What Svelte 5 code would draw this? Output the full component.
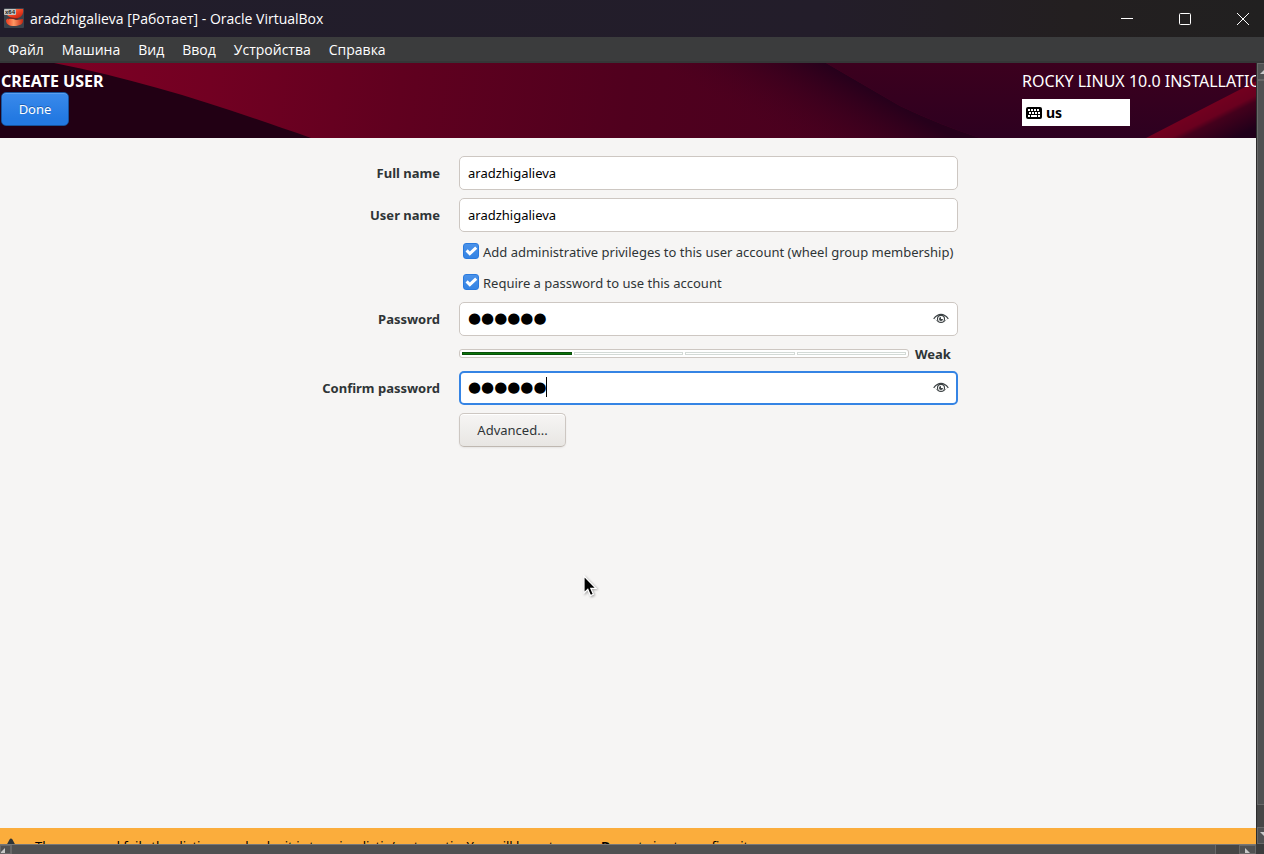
<script>
  const menus = ['Файл', 'Машина', 'Вид', 'Ввод', 'Устройства', 'Справка'];
  let fullName = $state('aradzhigalieva');
  let userName = $state('aradzhigalieva');
  let password = $state('●●●●●●');
  let confirmation = $state('●●●●●●');
  let admin = $state(true);
  let required = $state(true);
  const strength = 1;
</script>

{#snippet eye()}
  <button class="eye" type="button" aria-label="Show password">
    <svg width="16" height="12" viewBox="0 0 16 12" fill="none" stroke="#3c4244">
      <path d="M.7 5.8C3 2.8 5.3 1.4 8 1.4s5 1.4 7.3 4.4" stroke-width="1.2" />
      <circle cx="8" cy="5.9" r="3.5" stroke-width="1.1" />
      <path d="M8 3.9A2 2 0 1 0 10 5.9H8z" fill="#3c4244" stroke="none" />
      <path d="M2.8 6.6c.6 1 1.3 1.8 2.2 2.4M13.2 6.6c-.6 1-1.3 1.8-2.2 2.4" stroke-width=".7" opacity=".6" />
    </svg>
  </button>
{/snippet}

{#snippet check()}
  <svg class="tick" viewBox="0 0 16 16" aria-hidden="true"><path d="M3.6 7.4 6.8 10.6 13.2 4.6" fill="none" stroke="#fff" stroke-width="3" /></svg>
{/snippet}

<div class="window">
  <header class="titlebar">
    <svg class="logo" width="20" height="20" viewBox="0 0 20 20" aria-hidden="true">
      <defs>
        <linearGradient id="lr" x1="0" x2="1" y1="0" y2="1"><stop offset="0" stop-color="#ff9a68" /><stop offset=".5" stop-color="#f04424" /><stop offset="1" stop-color="#b81b0c" /></linearGradient>
        <linearGradient id="lo"><stop offset="0" stop-color="#ee3b1e" /><stop offset=".45" stop-color="#ff9863" /><stop offset="1" stop-color="#c42410" /></linearGradient>
      </defs>
      <rect width="20" height="20" rx="1" fill="#3b424b" />
      <path d="M11 1h8c1 4-1 8-5 9-5 1-9-1-11-3h6c2 0 2-2 2-6z" fill="url(#lr)" />
      <path d="M2 12c3-3 7-1 10 0 3 0 5-1 7-1 1 5-3 7-9 7-5 0-8-2-8-6z" fill="url(#lo)" />
      <path d="M4 11c4-2 7 0 10 0" fill="none" stroke="#8b160c" />
      <rect x="0" y="1" width="12" height="6" rx="1" fill="#c4c4c1" />
      <text x="1" y="6" font-family="Liberation Sans" font-size="6" font-weight="bold" fill="#222">x64</text>
    </svg>
    <h1>aradzhigalieva [Работает] - Oracle VirtualBox</h1>
    <div class="controls">
      <button aria-label="Minimize"><svg width="14" height="14" viewBox="0 0 14 14"><path d="M1 6.500h12" /></svg></button>
      <button aria-label="Maximize"><svg width="14" height="14" viewBox="0 0 14 14"><rect x="1.5" y="1.5" width="11" height="11" rx="1" /></svg></button>
      <button aria-label="Close"><svg width="14" height="14" viewBox="0 0 14 14"><path d="m1 1 12 12M13 1 1 13" /></svg></button>
    </div>
  </header>
  <nav>{#each menus as m}<button>{m}</button>{/each}</nav>

  <div class="viewer">
    <div class="screen">
      <main class="guest">
        <header class="banner">
          <svg class="art" viewBox="0 0 1280 75" preserveAspectRatio="none" aria-hidden="true">
            <defs>
              <linearGradient id="red" gradientUnits="userSpaceOnUse" x1="60" y1="0" x2="1000" y2="120">
                <stop offset="0" stop-color="#7d0024" /><stop offset=".16" stop-color="#720022" /><stop offset=".36" stop-color="#60001f" /><stop offset=".6" stop-color="#50001e" /><stop offset="1" stop-color="#44001f" />
              </linearGradient>
              <linearGradient id="shade" gradientUnits="userSpaceOnUse" x1="863" y1="22" x2="821" y2="95">
                <stop offset="0" stop-color="#26001b" /><stop offset="1" stop-color="#48001e" stop-opacity="0" />
              </linearGradient>
              <linearGradient id="plum" x1="0" y1="0" x2="0" y2="1"><stop offset="0" stop-color="#3c001e" /><stop offset="1" stop-color="#2d0020" /></linearGradient>
              <linearGradient id="ribbon" gradientUnits="userSpaceOnUse" x1="1201" y1="47" x2="1219" y2="83">
                <stop offset="0" stop-color="#72001f" /><stop offset=".28" stop-color="#6a001f" /><stop offset=".42" stop-color="#44001c" /><stop offset="1" stop-color="#20001a" />
              </linearGradient>
            </defs>
            <rect width="1280" height="75" fill="url(#red)" />
            <path d="M500 0H826L900 43Q940 62 980 75H500Z" fill="url(#shade)" />
            <path d="M826 0 900 43Q940 62 980 75H1280V0Z" fill="url(#plum)" />
            <path d="M0 0H54C145 18 220 43 311 75H0Z" fill="#220014" />
            <path d="M1146 75 1280 6V75Z" fill="url(#ribbon)" />
          </svg>
          <div class="spoke"><h2>CREATE USER</h2><button class="done">Done</button></div>
          <div class="product">
            <p>ROCKY LINUX 10.0 INSTALLATION</p>
            <button class="layout">
              <svg width="16" height="12" viewBox="0 0 16 12" aria-hidden="true"><rect width="16" height="12" rx="2" /><path d="M2 3h12M3 6h11" stroke="#fff" stroke-width="2" stroke-dasharray="2 1" /><path d="M2 9h2M5 9h6M12 9h2" stroke="#fff" stroke-width="2" /></svg>
              us
            </button>
          </div>
        </header>

        <form>
          <label class="name" for="full">Full name</label>
          <input class="entry" id="full" bind:value={fullName} />
          <label class="name" for="user">User name</label>
          <input class="entry" id="user" bind:value={userName} />
          <div class="option first"><span class="box"><input id="admin" type="checkbox" bind:checked={admin} />{@render check()}</span><label for="admin">Add administrative privileges to this user account (wheel group membership)</label></div>
          <div class="option"><span class="box"><input id="required" type="checkbox" bind:checked={required} />{@render check()}</span><label for="required">Require a password to use this account</label></div>
          <label class="name" for="pass">Password</label>
          <div class="secret"><input class="entry dots" id="pass" bind:value={password} />{@render eye()}</div>
          <div class="strength">
            <div class="meter">{#each [0, 1, 2, 3] as i}<span class:full={i < strength}></span>{/each}</div>
            <strong>Weak</strong>
          </div>
          <label class="name" for="confirm">Confirm password</label>
          <div class="secret"><input class="entry dots active" id="confirm" bind:value={confirmation} /><i class="caret"></i>{@render eye()}</div>
          <button class="advanced" type="button">Advanced...</button>
        </form>

        <footer>
          <svg width="16" height="16" viewBox="0 0 16 16" aria-hidden="true"><path d="M8 2 14.5 14H1.500Z" fill="none" stroke="#2e3436" stroke-width="3" stroke-linejoin="round" /><path d="M8 6v4M8 11v2" stroke="#2e3436" stroke-width="2" /></svg>
          <p>The password fails the dictionary check - it is too simplistic/systematic. You will have to press <b>Done</b> twice to confirm it.</p>
        </footer>
      </main>
      <svg class="pointer" width="14" height="24" viewBox="0 0 14 24" aria-hidden="true"><path d="M1 1v17l3.800-3.600 2.600 6.200 3-1.300-2.600-6H13z" fill="#000" stroke="#fff" stroke-width="1.200" /></svg>
    </div>
    <div class="vbar"><span class="arrow"><svg width="14" height="16" viewBox="0 0 14 16"><path d="M2 10h10L7 5z" /></svg></span><span class="thumb"></span><span class="track"></span><span class="arrow"><svg width="14" height="16" viewBox="0 0 14 16"><path d="M2 4h10L7 9z" /></svg></span></div>
    <div class="hbar"><span class="arrow"><svg width="11" height="16" viewBox="0 0 11 16"><path d="M4 2v12L-2 8z" /></svg></span><span class="thumb"></span><span class="track"></span><span class="arrow"><svg width="16" height="16" viewBox="0 0 16 16"><path d="M5 2v12l6-6z" /></svg></span></div>
    <div class="join"></div>
  </div>
</div>

<style>
  :global(body) { margin: 0; overflow: hidden; }
  * { box-sizing: border-box; }
  h1, h2, p { margin: 0; font-weight: 400; }
  button { font: inherit; color: inherit; border: 0; background: none; padding: 0; }
  .window { height: 100vh; display: flex; flex-direction: column; overflow: hidden; font: 13px/18px "Noto Sans", sans-serif; color: #2e3436; }

  .titlebar { flex: none; height: 37px; display: flex; align-items: center; padding-left: 4px; gap: 6px; color: #fff; background: linear-gradient(90deg, #211d2b 0%, #231d2a 65%, #231f20 85%, #212020); }
  .logo { margin-bottom: 2px; }
  h1 { font-family: "Open Sans", sans-serif; font-size: 14px; }
  .controls { margin-left: auto; display: flex; margin-right: -8px; }
  .controls button { width: 58px; height: 36px; display: grid; place-items: center; }
  .controls svg { fill: none; stroke: #fff; stroke-width: 1; }
  nav { flex: none; height: 26px; display: flex; align-items: center; gap: 18px; padding: 2px 0 0 8px; background: #3b3c3d; border-bottom: 2px solid #353637; color: #fff; font: 14px/22px "Open Sans", sans-serif; }

  .viewer { flex: 1; min-height: 0; display: grid; grid-template: 1fr 10px / 1fr 8px; background: #3b3c3d; }
  .screen { position: relative; overflow: hidden; min-width: 0; min-height: 0; }
  .guest { height: calc(100% + 19px); width: calc(100% + 24px); display: flex; flex-direction: column; background: #f6f5f4; }
  .banner { position: relative; flex: none; height: 75px; display: flex; justify-content: space-between; padding: 8px 0 0 1px; color: #fff; font-size: 16px; line-height: 21px; }
  .art { position: absolute; inset: 0; width: 100%; height: 100%; }
  .spoke, .product { position: relative; }
  h2 { font-size: 16px; font-weight: 700; line-height: 21px; }
  .done { width: 68px; height: 34px; font-size: 13px; border: 1px solid #15539e; border-radius: 5px; background: linear-gradient(#3a8aeb, #2379e2 80%); box-shadow: inset 0 1px #5b9eee; text-shadow: 0 -1px #1c5fb3; }
  .product { width: 258px; white-space: nowrap; }
  .layout { margin-top: 7px; width: 108px; height: 27px; display: flex; align-items: center; gap: 4px; padding-left: 4px; background: #fff; color: #000; font-weight: 700; font-size: 14px; }

  form { flex: 1; display: grid; grid-template-columns: 119px 499px; column-gap: 19px; justify-content: center; align-content: start; padding: 18px 1px 0 0; align-items: center; }
  .name { text-align: right; font-weight: 700; white-space: nowrap; }
  .entry { width: 100%; height: 34px; font: 13px/18px "Noto Sans", sans-serif; color: #000; padding: 0 8px; border: 1px solid #cdc7c2; border-radius: 5px; background: #fff; outline: none; }
  #user { margin-top: 8px; }
  label[for="user"] { margin-top: 8px; }
  .option { grid-column: 2; display: flex; align-items: center; gap: 4px; height: 31px; padding-left: 4px; white-space: nowrap; }
  .option.first { margin-top: 4px; }
  .option:not(.first) { margin-bottom: 4px; }
  .box { position: relative; width: 16px; height: 18px; }
  .box input { appearance: none; display: block; margin: 0; width: 16px; height: 16px; border: 1px solid #2a7ade; border-radius: 3px; background: linear-gradient(#4b92e9, #3584e4); }
  .tick { position: absolute; left: 0; top: 0; width: 16px; height: 16px; pointer-events: none; }
  .box input:not(:checked) + .tick { display: none; }
  .secret { position: relative; }
  .secret .entry { display: block; padding-right: 30px; }
  .secret .dots { font: 15px/20px "DejaVu Sans", sans-serif; padding-bottom: 2px; }
  .secret .active { border: 2px solid #3584e4; padding-left: 7px; }
  .caret { position: absolute; left: 87px; top: 6px; width: 1px; height: 20px; background: #000; }
  .eye { position: absolute; right: 9px; top: 11px; width: 16px; height: 12px; line-height: 0; }
  .strength { grid-column: 2; display: flex; align-items: center; gap: 6px; height: 35px; }
  .meter { flex: 1; height: 9px; display: flex; gap: 2px; padding: 2px; border: 1px solid #cdc7c2; border-radius: 3px; background: #fff; }
  .meter span { flex: 1; border: 1px solid #d3dad6; }
  .meter .full { border-color: #0a4f0a; background: #0a750a; }
  .strength strong { width: 43px; font-size: 13px; }
  .advanced { grid-column: 2; justify-self: start; margin-top: 8px; width: 107px; height: 34px; border: 1px solid #cdc7c2; border-bottom-color: #bfb8b1; border-radius: 5px; background: linear-gradient(#f6f5f4, #e8e6e3); box-shadow: inset 0 1px #fff, 0 1px 2px #0001; }

  footer { flex: none; height: 35px; display: flex; align-items: center; gap: 16px; padding-left: 3px; background: #fbad3c; color: #000; white-space: nowrap; }
  .pointer { position: absolute; left: 583px; top: 512px; filter: drop-shadow(1px 1px 1px #0005); }

  .vbar, .hbar { overflow: hidden; display: flex; background: #464646; }
  .vbar { flex-direction: column; border-left: 1px solid #2b2b2b; }
  .hbar { border-top: 1px solid #777; }
  .arrow { flex: none; overflow: hidden; background: #505152; border: 1px solid #686868; line-height: 0; }
  .arrow svg { fill: #c8c8c8; }
  .vbar .arrow { height: 17px; }
  .hbar .arrow { width: 11px; }
  .hbar .arrow:last-child { width: 17px; }
  .thumb { flex: 1; background: #505152; border: 1px solid #686868; }
  .vbar .thumb, .vbar .arrow { border-right: 0; }
  .vbar .track { height: 22px; }
  .hbar .track { width: 23px; }
  .hbar .thumb { border-top: 0; border-bottom: 0; }
  .join { background: #3b3c3d; }
</style>
